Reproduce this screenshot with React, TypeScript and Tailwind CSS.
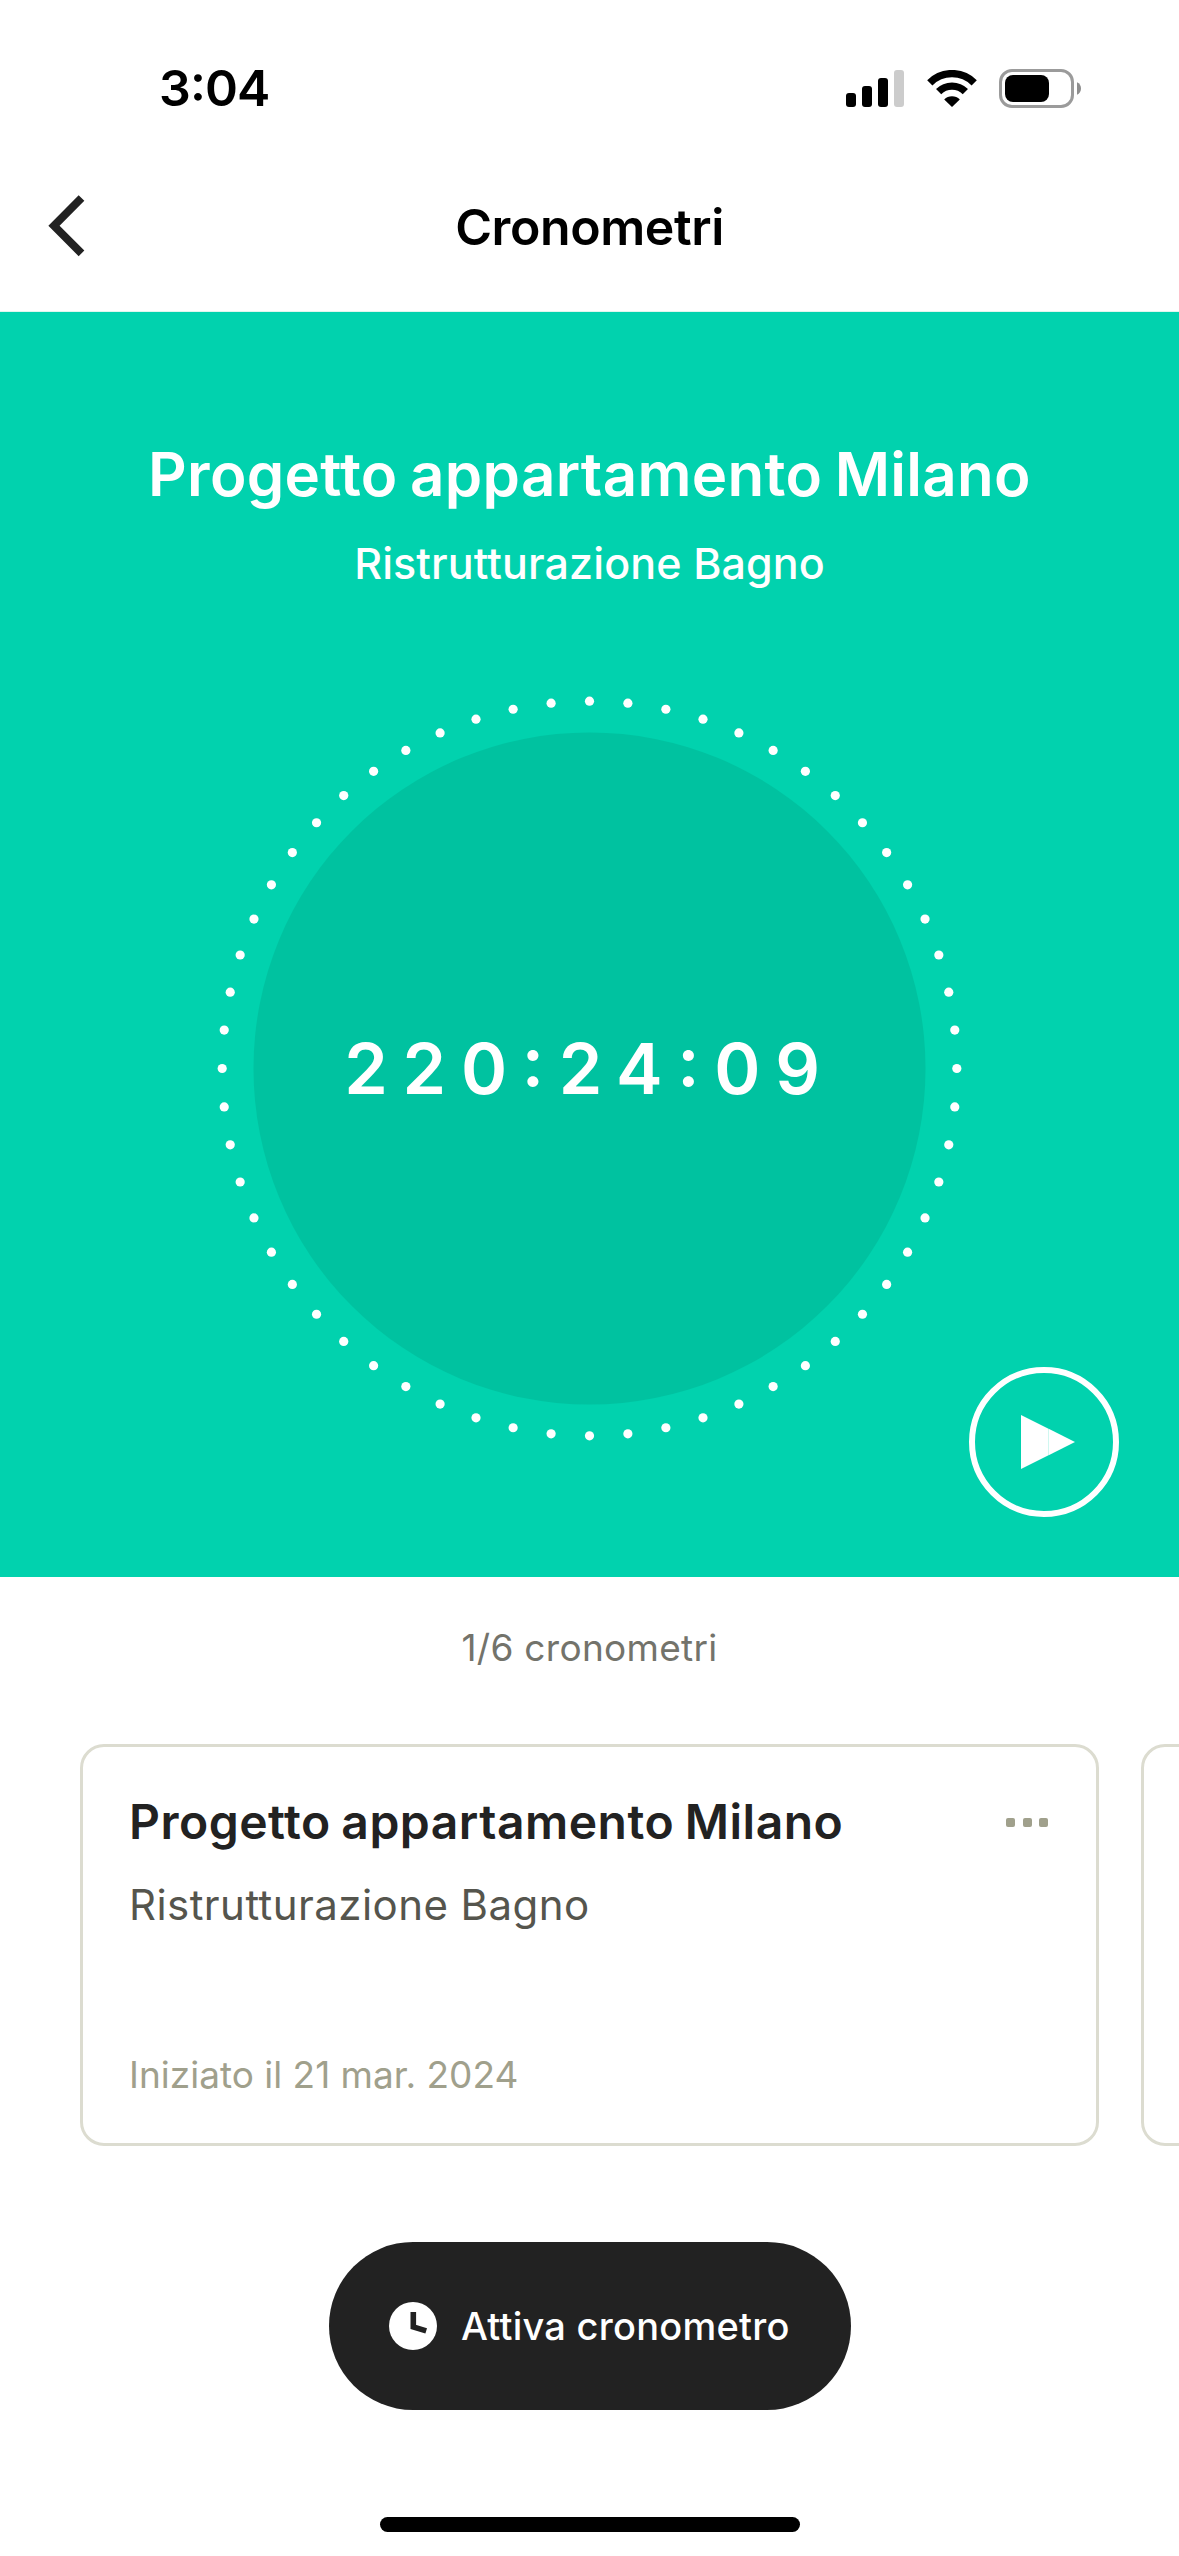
const TICKS = Array.from({ length: 60 }, (_, i) => (i * Math.PI) / 30);

function StatusBar() {
  return (
    <div className="flex h-[176px] shrink-0 items-center justify-between pl-[159px] pr-[98px]">
      <span className="text-[50px] font-semibold leading-[60px] tracking-[-0.9px] text-black [font-feature-settings:'case']">3:04</span>
      <div className="flex items-center">
        <svg width="58" height="37" viewBox="0 0 58 37" className="mr-[23px]">
          <rect x="0" y="23" width="10" height="14" rx="3" />
          <rect x="16" y="16" width="10" height="21" rx="3" />
          <rect x="32" y="8" width="10" height="29" rx="3" />
          <rect x="48" y="0" width="10" height="37" rx="3" fill="#cccccc" />
        </svg>
        <svg width="50" height="37" viewBox="0 0 50 37" fill="none" stroke="#000" strokeWidth="7.4" className="mr-[22px]">
          <path d="M2.8 12.8A31.4 31.4 0 0 1 47.2 12.8" />
          <path d="M11.64 21.64A18.9 18.9 0 0 1 38.36 21.64" />
          <path d="M25 37L17.2 29.4A11 11 0 0 1 32.8 29.4Z" fill="#000" stroke="none" />
        </svg>
        <svg width="82" height="39" viewBox="0 0 82 39">
          <rect x="1.5" y="1.5" width="72" height="36" rx="11.5" fill="none" stroke="#9b9b9b" strokeWidth="3" />
          <rect x="6" y="6" width="44" height="27" rx="8" />
          <path d="M78 13.2C80.6 14.2 82 16.6 82 19.5S80.6 24.8 78 25.8Z" fill="#8e8e8e" />
        </svg>
      </div>
    </div>
  );
}

function Header() {
  return (
    <header className="h-[136px] shrink-0 border-b border-[#dff6ee]">
      <div className="relative flex h-[101px] items-center justify-center">
        <svg width="38" height="62" viewBox="0 0 38 62" className="absolute left-[47px] top-[19px]" fill="none" stroke="#222222" strokeWidth="8">
          <path d="M34.5 3L7 30.7L34.5 58.4" />
        </svg>
        <h1 className="text-[50px] font-semibold leading-[60px] tracking-[-0.4px] text-black">Cronometri</h1>
      </div>
    </header>
  );
}

function Dial() {
  return (
    <div className="relative mt-[103px] flex h-[753px] w-[753px] items-center justify-center">
      <svg viewBox="0 0 753 753" className="absolute inset-0 h-full w-full">
        <circle cx="376.5" cy="376.5" r="336" fill="#00c2a0" />
        {TICKS.map((a) => (
          <circle key={a} cx={376.5 + 367.3 * Math.sin(a)} cy={376.5 - 367.3 * Math.cos(a)} r="4.6" fill="#fff" />
        ))}
      </svg>
      <span className="relative text-[70px] font-semibold leading-[84px] tracking-[14.7px] [font-feature-settings:'case']">220:24:09</span>
    </div>
  );
}

function TimerPanel() {
  return (
    <section className="relative flex h-[1265px] shrink-0 flex-col items-center bg-[#01d2ae] pt-[126px] text-white">
      <h2 className="whitespace-nowrap text-[60px] font-semibold leading-[72px] tracking-[0.3px] [word-spacing:-3px]">Progetto appartamento Milano</h2>
      <p className="mt-[27px] text-[43px] font-medium leading-[52px] tracking-[0.1px]">Ristrutturazione Bagno</p>
      <Dial />
      <button className="absolute bottom-[60px] right-[60px] flex h-[150px] w-[150px] items-center justify-center rounded-full border-6 border-white">
        <svg width="54" height="54" viewBox="0 0 54 54" fill="#fff" className="ml-[8px]">
          <path d="M0 0L27 13.5V40.5L0 54Z" />
          <path d="M27.2 13.6L54 27L27.2 40.4Z" />
        </svg>
      </button>
    </section>
  );
}

function TimerCards() {
  return (
    <div className="mt-[73px] flex h-[402px] shrink-0 gap-[42px] overflow-hidden pl-[80px]">
      <article className="flex w-[1019px] shrink-0 flex-col justify-between rounded-[24px] border-3 border-[#dcdcd0] pb-[46px] pl-[46px] pr-[48px] pt-[46px]">
        <div>
          <div className="flex items-center justify-between">
            <h3 className="text-[48px] font-semibold leading-[58px] tracking-[0.5px] text-[#222222] [word-spacing:-2px]">Progetto appartamento Milano</h3>
            <div className="flex gap-[7.5px]">
              <i className="h-[9px] w-[9px] rounded-[2px] bg-[#a0a08c]" />
              <i className="h-[9px] w-[9px] rounded-[2px] bg-[#a0a08c]" />
              <i className="h-[9px] w-[9px] rounded-[2px] bg-[#a0a08c]" />
            </div>
          </div>
          <p className="mt-[29px] text-[42px] leading-[50px] tracking-[0.44px] text-[#55554d]">Ristrutturazione Bagno</p>
        </div>
        <p className="text-[37px] leading-[44px] text-[#a0a08c]">Iniziato il 21 mar. 2024</p>
      </article>
      <article className="w-[1019px] shrink-0 rounded-[24px] border-3 border-[#dcdcd0]" />
    </div>
  );
}

export default function App() {
  return (
    <div className="flex h-[2556px] w-[1179px] flex-col overflow-hidden bg-white font-['Inter',sans-serif] [font-variant-ligatures:none]">
      <StatusBar />
      <Header />
      <TimerPanel />
      <p className="mt-[48px] text-center text-[37px] leading-[46px] tracking-[0.3px] text-[#73736b]">1/6 cronometri</p>
      <TimerCards />
      <button className="ml-[329px] mt-[96px] flex h-[168px] w-[522px] shrink-0 items-center rounded-full bg-[#222222] pl-[60px] text-white">
        <svg width="48" height="48" viewBox="0 0 48 48">
          <circle cx="24" cy="24" r="24" fill="#fff" />
          <path d="M24.3 10V25L37.2 28.9" fill="none" stroke="#222222" strokeWidth="5.6" />
        </svg>
        <span className="ml-[24px] whitespace-nowrap text-[38px] font-medium leading-[46px] tracking-[0.25px]">Attiva cronometro</span>
      </button>
      <div className="mt-[107px] h-[15px] w-[420px] shrink-0 self-center rounded-full bg-black" />
    </div>
  );
}
